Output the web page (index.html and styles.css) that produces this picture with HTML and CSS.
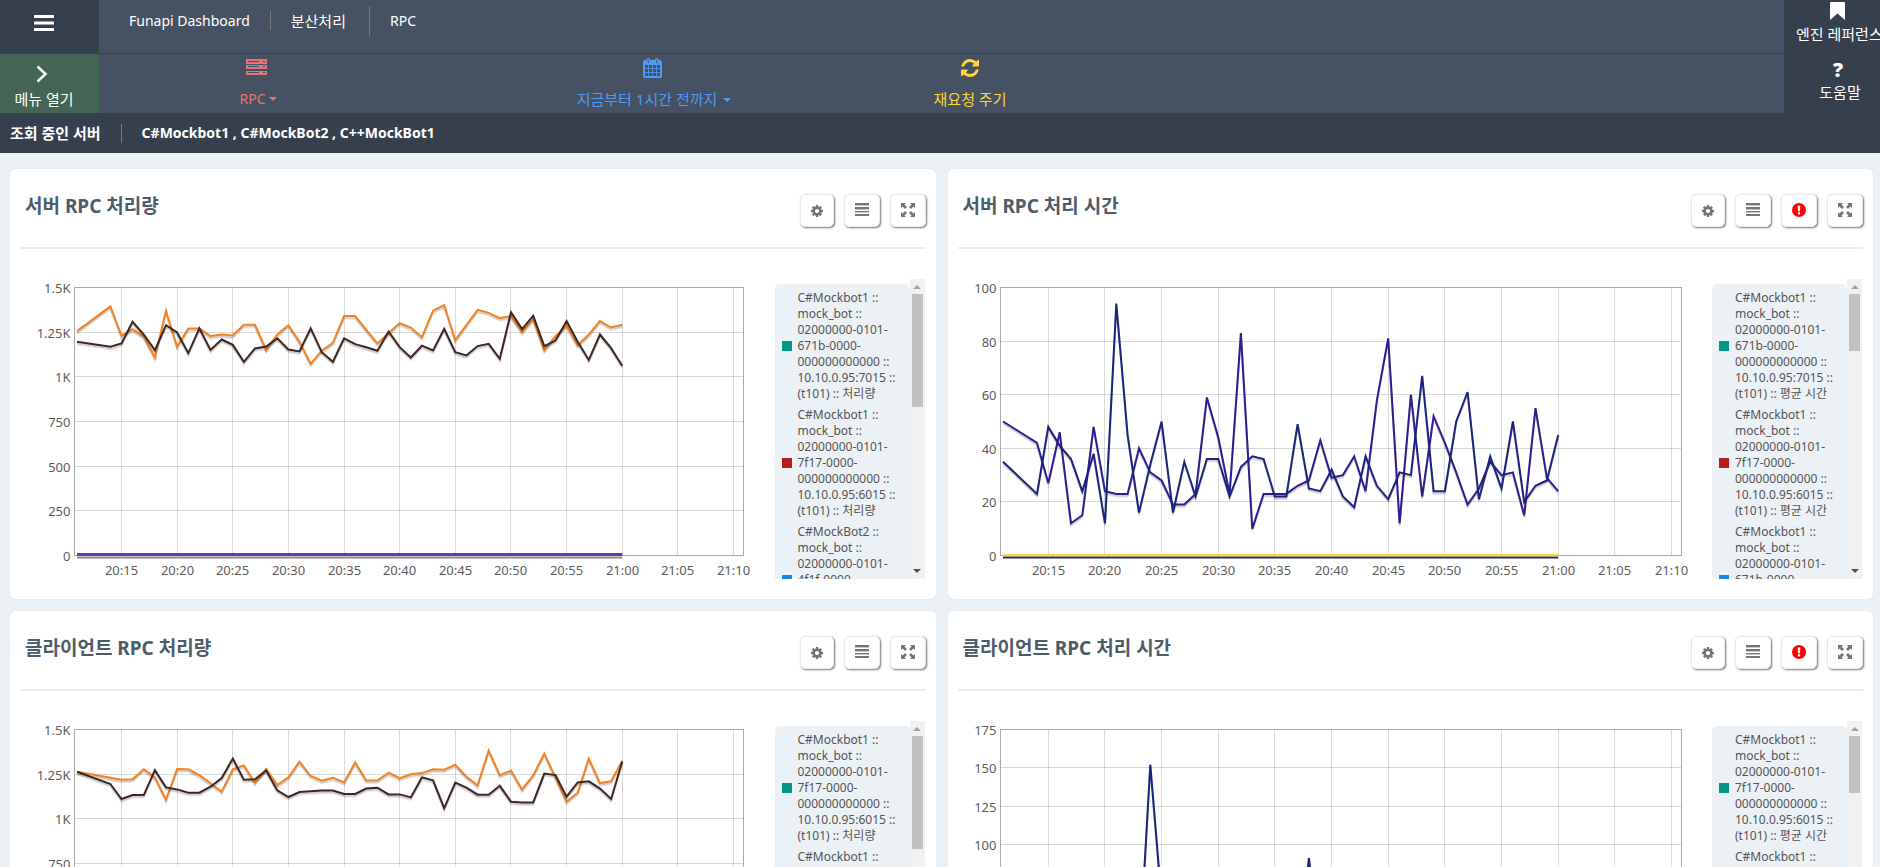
FILE: index.html
```html
<!DOCTYPE html>
<html lang="ko">
<head>
<meta charset="utf-8">
<title>Funapi Dashboard</title>
<link rel="stylesheet" href="styles.css">
</head>
<body>
<svg class="sprite" aria-hidden="true">
  <symbol id="i-cog" viewBox="128 128 1536 1536"><path d="M1152 896q0-106-75-181t-181-75-181 75-75 181 75 181 181 75 181-75 75-181zm512-109v222q0 12-8 23t-20 13l-185 28q-19 54-39 91 35 50 107 138 10 12 10 25t-9 23q-27 37-99 108t-94 71q-12 0-26-9l-138-108q-44 23-91 38-16 136-29 186-7 28-36 28h-222q-14 0-24.500-8.500t-11.500-21.500l-28-184q-49-16-90-37l-141 107q-10 9-25 9-14 0-25-11-126-114-165-168-7-10-7-23 0-12 8-23 15-21 51-66.500t54-70.500q-27-50-41-99l-183-27q-13-2-21-12.500t-8-23.500v-222q0-12 8-23t19-13l186-28q14-46 39-92-40-57-107-138-10-12-10-24 0-10 9-23 26-36 98.500-107.500t94.500-71.500q13 0 26 10l138 107q44-23 91-38 16-136 29-186 7-28 36-28h222q14 0 24.500 8.500t11.500 21.500l28 184q49 16 90 37l142-107q9-9 24-9 13 0 25 10 129 119 165 170 7 8 7 22 0 12-8 23-15 21-51 66.500t-54 70.500q26 50 41 98l183 28q13 2 21 12.500t8 23.500z"/></symbol>
  <symbol id="i-list" viewBox="0 0 14 14"><path d="M0 0h14v2H0zM0 4h14v2H0zM0 8h14v1H0zM0 11h14v2H0z"/><path opacity=".4" d="M0 2h14v1H0zM0 6h14v1H0zM0 9h14v1H0z"/></symbol>
  <symbol id="i-expand" viewBox="0 0 14 14"><path d="M0 0h5L3.500 1.500 6 4 4 6 1.500 3.500 0 5zM14 0v5l-1.500-1.500L10 6 8 4l2.500-2.500L9 0zM0 14V9l1.500 1.500L4 8l2 2-2.500 2.500L5 14zM14 14H9l1.500-1.500L8 10l2-2 2.500 2.500L14 9z"/></symbol>
  <symbol id="i-alert" viewBox="0 0 14 14"><circle cx="7" cy="7" r="7"/><path fill="#fff" d="M5.700 2.500h2.600L8 8.200H6zM5.900 9.300h2.200v2.200H5.900z"/></symbol>
</svg>

<header class="top">
  <button class="menu-toggle" aria-label="메뉴">
    <svg width="20" height="16" viewBox="0 0 20 16" fill="#fff"><rect width="20" height="3" y="0" rx=".5"/><rect width="20" height="3" y="6.500" rx=".5"/><rect width="20" height="3" y="13" rx=".5"/></svg>
  </button>
  <nav class="crumbs">
    <a href="#">Funapi Dashboard</a><span class="sep"></span><a href="#" class="ko">분산처리</a><span class="sep tall"></span><a href="#">RPC</a>
  </nav>
  <button class="menu-open">
    <svg width="12" height="18" viewBox="0 0 12 18" fill="none" stroke="#fff" stroke-width="2.500"><path d="M1.500 1.500 9.500 9 1.500 16.500"/></svg>
    <span class="ko">메뉴 열기</span>
  </button>
  <div class="tools">
    <button class="tool red">
      <svg width="21" height="20" viewBox="0 0 21 20" fill="currentColor"><path fill-rule="evenodd" d="M0 1h21v5H0zM2 3v1h11V3zM17 3v1h2V3zM0 7h21v4H0zM2 8v1h11V8zM17 8v1h2V8zM0 13h21v4H0zM2 14v1h11v-1zM17 14v1h2v-1z"/></svg>
      <span>RPC<i class="caret"></i></span>
    </button>
    <button class="tool blue">
      <svg width="19" height="20" viewBox="0 0 19 20" fill="none" stroke="currentColor"><rect x="1" y="3" width="17" height="16" rx="1" stroke-width="2"/><path stroke-width="4" d="M1 5h17"/><path d="M5.500 6v13M9.500 6v13M13.500 6v13M1 10.500h17M1 14.500h17" opacity=".8"/><g fill="#465164" stroke-width="1.500"><rect x="4" y="1" width="2.500" height="5" rx="1"/><rect x="12.500" y="1" width="2.500" height="5" rx="1"/></g></svg>
      <span class="ko">지금부터 1시간 전까지<i class="caret far"></i></span>
    </button>
    <button class="tool yellow">
      <svg width="18" height="20" viewBox="128 43 1536 1706" fill="currentColor"><path d="M1639 1056q0 5-1 7-64 268-268 434.500t-478 166.500q-146 0-282.500-55t-243.500-157l-129 129q-19 19-45 19t-45-19-19-45v-448q0-26 19-45t45-19h448q26 0 45 19t19 45-19 45l-137 137q71 66 161 102t187 36q134 0 250-65t186-179q11-17 53-117 8-23 30-23h192q13 0 22.500 9.500t9.500 22.500zm25-800v448q0 26-19 45t-45 19h-448q-26 0-45-19t-19-45 19-45l138-138q-148-137-349-137-134 0-250 65t-186 179q-11 17-53 117-8 23-30 23h-199q-13 0-22.500-9.500t-9.500-22.500v-7q65-268 270-434.500t480-166.500q146 0 284 55.500t245 156.500l130-129q19-19 45-19t45 19 19 45z"/></svg>
      <span class="ko">재요청 주기</span>
    </button>
  </div>
  <div class="links">
    <a href="#"><svg width="15" height="18" viewBox="0 0 15 18" fill="#fff"><path d="M1 0h13q1 0 1 1v17l-7.500-6.500L0 18V1q0-1 1-1z"/></svg><span class="ko">엔진 레퍼런스</span></a>
    <a href="#" class="help"><b>?</b><span class="ko">도움말</span></a>
  </div>
</header>
<div class="servers"><strong class="ko">조회 중인 서버</strong><span class="sep"></span><strong>C#Mockbot1 , C#MockBot2 , C++MockBot1</strong></div>
<main class="cards" id="cards"></main>
<script src="script.js"></script>
</body>
</html>
```
FILE: styles.css
```css
* { box-sizing: border-box; }
html { scrollbar-width: none; }
body {
  margin: 0;
  background: #ecf1f5;
  color: #545454;
  font: 14px/20px "Noto Sans", "Open Sans", "Noto Sans CJK KR", sans-serif;
  overflow-x: hidden;
}
button { border: 0; padding: 0; background: none; font: inherit; color: inherit; cursor: pointer; }
a { color: inherit; text-decoration: none; }
svg { display: block; flex: none; }
.sprite { display: none; }
.ko { font-size: 15px; }

.top {
  display: grid;
  grid-template-columns: 99px 1fr 96px;
  grid-template-rows: 54px 59px;
  background: #36404d;
  color: #fff;
}
.menu-toggle { display: flex; padding: 15px 0 0 34px; }
.crumbs {
  display: flex;
  align-items: center;
  height: 53px;
  padding: 0 30px 12px;
  background: #465164;
}
.sep { width: 1px; height: 19px; margin: 0 20px; background: #777; }
.tall { height: 30px; margin-left: 23px; }
.menu-open {
  grid-column: 1;
  display: flex;
  flex-direction: column;
  align-items: center;
  gap: 6px;
  padding: 11px 15px 0 0;
  background: #446455;
}
.menu-open span { padding-left: 4px; }
.tools {
  display: grid;
  grid-template-columns: 318fr 474fr 158fr 735fr;
  background: #465164;
}
.tool { display: flex; flex-direction: column; align-items: center; gap: 11px; padding-top: 4px; }
.tool svg { margin-right: 4px; }
.tool.yellow svg { margin-right: 0; }
.red { color: #e57373; }
.blue { color: #4f9bef; }
.yellow { color: #fdd835; }
.caret {
  display: inline-block;
  margin-left: 3px;
  vertical-align: 3px;
  border: 4px solid transparent;
  border-top-color: currentColor;
  border-bottom: 0;
}
.caret.far { margin-left: 6px; }
.links { grid-column: 3; grid-row: 1 / 3; display: flex; flex-direction: column; gap: 5px; padding-top: 2px; }
.links a { display: flex; flex-direction: column; align-items: center; gap: 4px; height: 56px; white-space: nowrap; }
.links a:first-child { align-items: flex-start; padding-left: 12px; }
.links a:first-child svg { margin-left: 34px; }
.links .help { gap: 2px; padding-left: 12px; }
.help b { font: 800 20px/20px "Open Sans", sans-serif; }
.help span { padding-left: 4px; }
.servers {
  display: flex;
  align-items: center;
  height: 40px;
  padding: 0 10px;
  background: #36404d;
  color: #fff;
}

.cards {
  display: grid;
  grid-template-columns: 1fr 1fr;
  gap: 12px;
  padding: 16px 7px 12px 10px;
}
.card { min-width: 0; padding: 0 10px 20px; background: #fff; border-radius: 5px; box-shadow: 0 0 1px #ccc; }
.card-head {
  display: flex;
  justify-content: space-between;
  align-items: flex-start;
  height: 80px;
  padding: 25px 0 0 5px;
  border-bottom: 2px solid #ececec;
}
.card h2 { margin: 0; font-size: 19px; line-height: 24px; font-weight: 700; color: #4d5c6a; }
.actions { display: flex; gap: 10px; }
.actions button {
  display: flex;
  align-items: center;
  justify-content: center;
  width: 36px;
  height: 33px;
  padding-bottom: 2px;
  border: 1px solid #eaeaea;
  border-radius: 5px;
  background: #fff;
  color: #757575;
  fill: currentColor;
  box-shadow: 1px 1px 2px #777;
}
.actions .alert { color: #f00; }
.actions .cog { width: 34px; padding-bottom: 0; }
.card-body { display: flex; padding-top: 30px; }
.chart { flex: 1; min-width: 0; height: 300px; }
.chart text { font-size: 13px; fill: #5c5c5c; }
.legend { display: flex; flex: none; width: 150px; height: 300px; margin-right: 1px; overflow: hidden; }
.legend ul {
  flex: 1;
  height: 1200px;
  margin: 5px 0 0;
  padding: 6px 7px;
  list-style: none;
  background: #ecf1f5;
  border-radius: 5px;
}
.legend li { display: flex; align-items: center; gap: 6px; margin-bottom: 5px; font-size: 12px; line-height: 16px; }
.swatch { flex: none; width: 10px; height: 10px; }
.scrollbar {
  display: flex;
  flex-direction: column;
  justify-content: space-between;
  align-items: center;
  width: 15px;
  height: 300px;
  padding: 6px 0;
  background: #f1f1f1;
}
.arrow { border: 4px solid transparent; border-top: 0; border-bottom-color: #a3a3a3; }
.arrow.down { border-top: 4px solid #505050; border-bottom: 0; }
.thumb { width: 11px; margin: 5px 0 auto; background: #c1c1c1; }
```
FILE: script.js
```js
const MINUTES = [11].concat(Array.from({ length: 47 }, (_, i) => i + 14));
const ORANGE = '#f58220', BROWN = '#3e2723', PURPLE = '#311b92', NAVY = '#1a237e';
const TEAL = '#009688', RED = '#b71c1c', BLUE = '#1e88e5';

const item = (color, name, id, port, unit) => ({ color, name, id, port, unit });

const charts = [
  {
    title: '서버 RPC 처리량', left: 54, max: 1500, step: 250, thumb: 113,
    base: ['#673ab7', 3, 'rgba(60,60,60,.6)'],
    series: [
      [ORANGE, [1256,1394,1230,1267,1224,1108,1370,1170,1271,1271,1228,1237,1232,1291,1291,1151,1237,1289,1196,1073,1146,1190,1340,1340,1263,1187,1246,1300,1276,1222,1370,1401,1205,1289,1375,1358,1329,1340,1250,1323,1149,1228,1286,1176,1237,1312,1276,1291]],
      [BROWN, [1196,1168,1187,1308,1237,1149,1289,1248,1133,1271,1151,1209,1179,1084,1159,1170,1215,1153,1142,1271,1138,1084,1215,1183,1166,1146,1254,1166,1108,1174,1148,1269,1138,1120,1172,1185,1101,1362,1267,1342,1172,1203,1312,1196,1095,1237,1161,1062]]
    ],
    legend: [item(TEAL, 'C#Mockbot1', '671b', 7015, '처리량'), item(RED, 'C#Mockbot1', '7f17', 6015, '처리량'), item(BLUE, 'C#MockBot2', '4f1f', 7015, '처리량')]
  },
  {
    title: '서버 RPC 처리 시간', left: 42, max: 100, step: 20, thumb: 57, alert: true,
    base: ['#fdd835', 2, '#333'],
    series: [
      [PURPLE, [50,42,27,46,12,15,48,24,23,23,40,31,28,19,19,23,59,44,23,83,10,23,23,23,26,28,43,29,30,37,24,58,81,12,60,22,52,42,31,19,25,35,30,31,15,55,29,24]],
      [NAVY, [35,23,48,41,36,24,38,12,94,45,16,34,50,16,35,22,36,36,22,33,37,36,22,22,49,25,24,32,22,18,37,26,21,31,30,67,24,24,50,61,21,37,25,50,20,26,28,45]]
    ],
    legend: [item(TEAL, 'C#Mockbot1', '671b', 7015, '평균 시간'), item(RED, 'C#Mockbot1', '7f17', 6015, '평균 시간'), item(BLUE, 'C#Mockbot1', '671b', 7015, '최대 시간')]
  },
  {
    title: '클라이언트 RPC 처리량', left: 54, max: 1500, step: 250, thumb: 113,
    base: ['#673ab7', 3, 'rgba(60,60,60,.6)'],
    series: [
      [ORANGE, [1264,1230,1219,1221,1277,1232,1107,1279,1277,1245,1199,1152,1277,1299,1202,1279,1189,1232,1320,1240,1214,1230,1204,1316,1215,1214,1258,1228,1249,1256,1277,1275,1303,1236,1187,1382,1245,1270,1165,1243,1365,1232,1096,1146,1337,1200,1210,1325]],
      [BROWN, [1264,1195,1111,1133,1133,1273,1176,1165,1146,1146,1180,1228,1337,1219,1221,1271,1159,1122,1150,1154,1158,1158,1139,1139,1169,1174,1137,1137,1120,1232,1215,1060,1202,1174,1135,1135,1185,1096,1092,1092,1253,1245,1124,1204,1210,1169,1111,1319]]
    ],
    legend: [item(TEAL, 'C#Mockbot1', '7f17', 6015, '처리량'), item(RED, 'C#Mockbot1', '671b', 7015, '처리량')]
  },
  {
    title: '클라이언트 RPC 처리 시간', left: 42, max: 175, step: 25, thumb: 57, alert: true,
    base: ['#fdd835', 2, '#333'],
    series: [
      [NAVY, [40,30,36,28,44,32,25,30,38,26,22,152,63,30,28,35,40,32,26,30,38,36,28,33,25,91,30,34,26,30,42,35,28,30,38,26,33,41,29,30,36,25,34,40,28,30,35,30]]
    ],
    legend: [item(TEAL, 'C#Mockbot1', '7f17', 6015, '평균 시간'), item(RED, 'C#Mockbot1', '671b', 7015, '평균 시간')]
  }
];

const icon = (id, w, h) => `<svg width="${w}" height="${h}"><use href="#i-${id}"/></svg>`;

function cardHtml(c) {
  const alert = c.alert ? `<button class="alert" aria-label="경고">${icon('alert', 14, 14)}</button>` : '';
  const rows = c.legend.map(l => `<li><span class="swatch" style="background:${l.color}"></span><span>${l.name} :: mock_bot :: 02000000-0101-<wbr>${l.id}-0000-<wbr>000000000000 :: 10.10.0.95:${l.port} :: (t101) :: ${l.unit}</span></li>`).join('');
  return `<section class="card"><div class="card-head"><h2>${c.title}</h2><div class="actions">
    <button class="cog" aria-label="설정">${icon('cog', 12, 12)}</button>
    <button aria-label="목록">${icon('list', 14, 14)}</button>${alert}
    <button aria-label="확대">${icon('expand', 14, 14)}</button></div></div>
    <div class="card-body"><div class="chart"></div>
    <div class="legend"><ul>${rows}</ul><div class="scrollbar"><i class="arrow"></i><i class="thumb" style="height:${c.thumb}px"></i><i class="arrow down"></i></div></div></div></section>`;
}

function drawChart(box, c) {
  const width = box.clientWidth, top = 8.5, bottom = 276.5;
  const left = c.left + 0.5, right = width - 31.5;
  const perMinute = (right - left - 12.5) / 59;
  const x = m => left + 2.5 + (m - 11) * perMinute;
  const y = v => bottom - v / c.max * (bottom - top);
  const snap = n => Math.floor(n) + 0.5;
  let grid = '', labels = '';
  for (let m = 15; m <= 70; m += 5) {
    const gx = snap(x(m));
    grid += `M${gx} ${top}V${bottom}`;
    const time = m < 60 ? `20:${m}` : `21:${String(m - 60).padStart(2, '0')}`;
    labels += `<text x="${gx}" y="296" text-anchor="middle">${time}</text>`;
  }
  for (let v = 0; v <= c.max; v += c.step) {
    const gy = snap(y(v));
    if (v && v < c.max) grid += `M${left} ${gy}H${right}`;
    labels += `<text x="${left - 4}" y="${gy + 5}" text-anchor="end">${v >= 1000 ? v / 1000 + 'K' : v}</text>`;
  }
  const lines = c.series.map(([color, values]) => {
    const pts = values.map((v, i) => `${x(MINUTES[i]).toFixed(1)},${y(v).toFixed(1)}`).join(' ');
    const line = (stroke, w, dy) => `<polyline points="${pts}" transform="translate(0 ${dy})" stroke="${stroke}" stroke-width="${w}"/>`;
    return line('rgba(0,0,0,.1)', 2, 2.5) + line('rgba(0,0,0,.12)', 2, 1.5) + line(color, 2, 0);
  }).join('');
  const [color, w, shade] = c.base;
  const base = `<path stroke="${shade}" stroke-width="2" d="M${x(11)} ${bottom + 2}H${x(60)}"/><path stroke="${color}" stroke-width="${w}" d="M${x(11)} ${bottom - w / 2 + 0.5}H${x(60)}"/>`;
  box.innerHTML = `<svg width="${width}" height="300" fill="none"><path d="${grid}" stroke="#545454" stroke-opacity=".22"/>
    <rect x="${left}" y="${top}" width="${right - left}" height="${bottom - top}" stroke="#aaa"/>${lines}${base}${labels}</svg>`;
}

const root = document.getElementById('cards');
root.innerHTML = charts.map(cardHtml).join('');
const boxes = root.querySelectorAll('.chart');
const drawAll = () => boxes.forEach((box, i) => drawChart(box, charts[i]));
drawAll();
window.addEventListener('resize', drawAll);
```
